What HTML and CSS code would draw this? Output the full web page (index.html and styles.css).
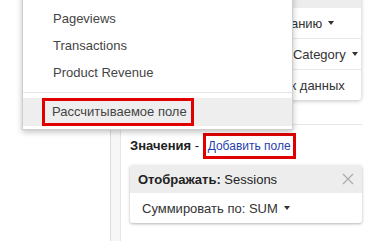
FILE: index.html
```html
<!DOCTYPE html>
<html lang="ru">
<head>
    <meta charset="UTF-8">
    <meta name="viewport" content="width=device-width, initial-scale=1.0">
    <title>Настройка отчета</title>
    <link rel="stylesheet" href="styles.css">
</head>
<body>
    <div class="page">
        <div class="gutter"></div>
        <div class="strip"></div>

        <div class="main">
            <!-- Report options -->
            <div class="config">
                <div class="config-head"></div>
                <div class="config-row">Упорядочение: по возрастанию <span class="caret"></span></div>
                <div class="config-row">Второй параметр: Product Category <span class="caret"></span></div>
                <div class="config-row">Использовать как источник данных</div>
            </div>

            <!-- Values -->
            <div class="values">
                <div class="values-title">
                    <b>Значения</b> - <span class="mark mark-link"><a href="#">Добавить поле</a></span>
                </div>
                <div class="metric-card">
                    <div class="metric-head">
                        <span><b>Отображать:</b> Sessions</span>
                        <svg class="close" width="12" height="12" viewBox="0 0 12 12">
                            <path d="M1 1 L11 11 M11 1 L1 11" stroke="#ababab" stroke-width="1.2" fill="none"/>
                        </svg>
                    </div>
                    <div class="metric-body">Суммировать по: SUM <span class="caret"></span></div>
                </div>
            </div>
        </div>

        <!-- Field picker dropdown -->
        <div class="menu">
            <div class="menu-item">Pageviews</div>
            <div class="menu-item">Transactions</div>
            <div class="menu-item">Product Revenue</div>
            <div class="menu-sep"></div>
            <div class="menu-item active"><span class="mark">Рассчитываемое поле</span></div>
        </div>
    </div>
</body>
</html>
```

FILE: styles.css
```css
body {
    margin: 0;
    font-family: "Liberation Sans", Arial, sans-serif;
    font-size: 13px;
    color: #333;
    background-color: #fff;
}

.page {
    position: relative;
    display: flex;
    height: 241px;
    overflow: hidden;
}

.gutter {
    width: 110px;
    flex-shrink: 0;
}

.strip {
    width: 9px;
    flex-shrink: 0;
    background-color: #f7f7f7;
    border-left: 1px solid #dcdcdc;
    border-right: 1px solid #e6e6e6;
}

.main {
    flex: 1;
    padding: 0 10px 0 9px;
}

.config {
    margin-top: -20px;
    margin-right: 1px;
    background-color: #fff;
    border-radius: 3px;
    box-shadow: 0 1px 4px rgba(0, 0, 0, 0.25);
}

.config-head {
    height: 28px;
    background-color: #ededed;
}

.config-row {
    display: flex;
    align-items: center;
    height: 30px;
    padding-left: 3px;
    border-bottom: 1px solid #e8e8e8;
    white-space: nowrap;
    overflow: hidden;
}

.config-row:last-child {
    border-bottom: none;
}

.caret {
    display: inline-block;
    margin-left: 6px;
    border-left: 3px solid transparent;
    border-right: 3px solid transparent;
    border-top: 4px solid #333;
}

.values {
    margin-top: 24px;
    border-top: 1px solid #e6e6e6;
}

.values-title {
    margin-top: 8px;
    height: 25px;
    display: flex;
    align-items: center;
    color: #222;
    white-space: pre;
}

.mark {
    display: inline-block;
    border: 3px solid #e00000;
    padding: 0 2px;
    line-height: 19px;
}

.mark a {
    font-size: 12px;
    color: #2a3fae;
    text-decoration: none;
}

.metric-card {
    margin-top: 7px;
    border-radius: 3px;
    background-color: #fff;
    box-shadow: 0 1px 3px rgba(0, 0, 0, 0.3);
    overflow: hidden;
}

.metric-head {
    display: flex;
    align-items: center;
    justify-content: space-between;
    height: 28px;
    padding: 0 8px 0 8px;
    background-color: #ededed;
    color: #222;
}

.metric-body {
    display: flex;
    align-items: center;
    height: 30px;
    padding-left: 12px;
    color: #333;
}

.menu {
    position: absolute;
    left: 22px;
    top: -10px;
    width: 269px;
    padding: 14px 0 3px 0;
    background-color: #fff;
    border: 1px solid #cfcfcf;
    box-shadow: 0 2px 6px rgba(0, 0, 0, 0.25);
    color: #444;
}

.menu-item {
    height: 27px;
    line-height: 27px;
    padding-left: 30px;
}

.menu-sep {
    margin: 6px 0 5px 0;
    border-top: 1px solid #e6e6e6;
}

.menu-item.active {
    height: 28px;
    line-height: 28px;
    padding-left: 19px;
    background-color: #eee;
}

.menu-item.active .mark {
    line-height: 22px;
    padding: 0 4px 0 7px;
    vertical-align: top;
}
```
